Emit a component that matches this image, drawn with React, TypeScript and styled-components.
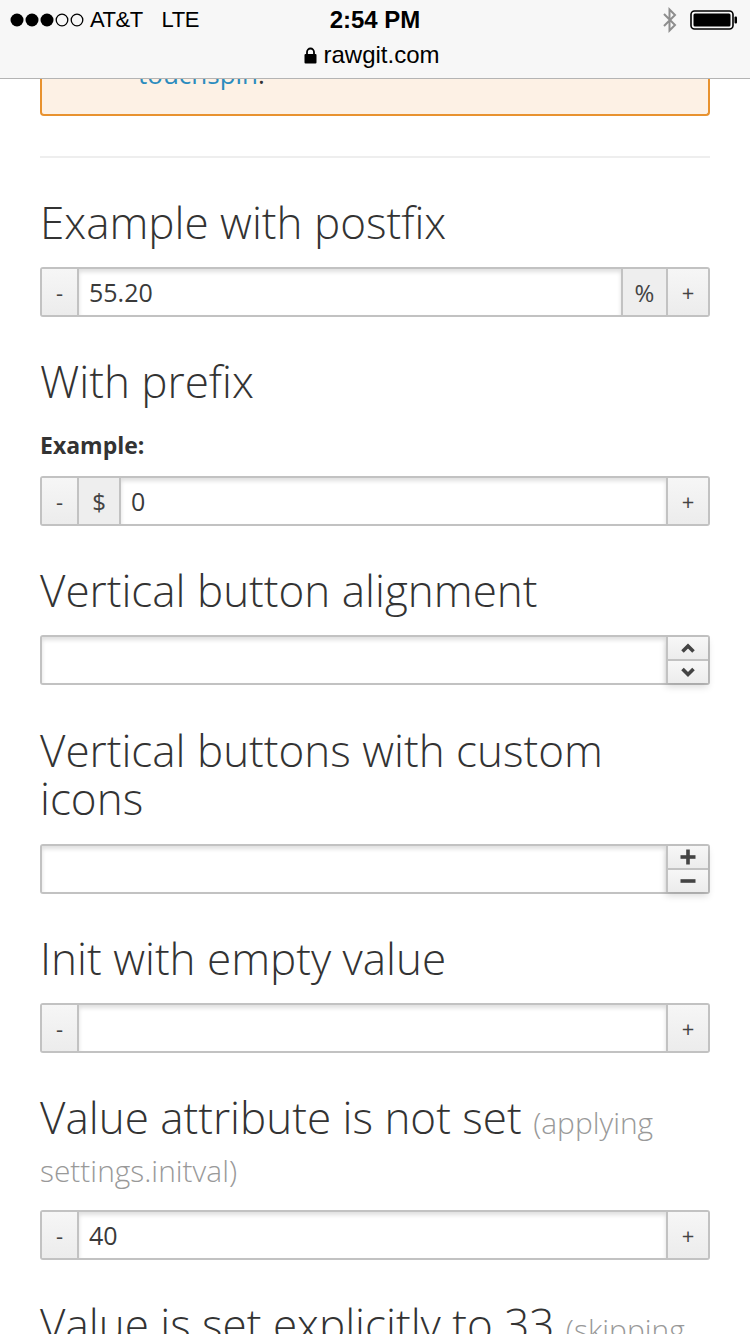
import styled, {createGlobalStyle} from "styled-components";

const GlobalStyle = createGlobalStyle`
    html, body {
        margin: 0;
        padding: 0;
        background: #fff;
    }
    body {
        font-family: 'Open Sans', 'Liberation Sans', sans-serif;
        color: #333;
    }
    * {
        box-sizing: border-box;
    }
`

const SignalDots = () => (
    <svg width="74" height="14" viewBox="0 0 74 14">
        {[0, 1, 2, 3, 4].map(i => (
            <circle key={i} cx={7 + i * 15} cy={7} r={i < 3 ? 6.5 : 5.8}
                    fill={i < 3 ? '#000' : 'none'} stroke="#000" strokeWidth={i < 3 ? 0 : 1.3}/>
        ))}
    </svg>
)

const Bluetooth = () => (
    <svg width="16" height="28" viewBox="0 0 16 28">
        <path d="M2 8 L13 19 L7.5 24.5 V3.5 L13 9 L2 20" fill="none" stroke="#8e8e8e" strokeWidth="2"/>
    </svg>
)

const Battery = () => (
    <svg width="48" height="20" viewBox="0 0 48 20">
        <rect x="1" y="1" width="42" height="18" rx="3.5" fill="none" stroke="#000" strokeWidth="1.6"/>
        <rect x="3.5" y="3.5" width="37" height="13" rx="1.5" fill="#000"/>
        <rect x="44.5" y="6.5" width="2.5" height="7" rx="1" fill="#000"/>
    </svg>
)

const Lock = () => (
    <svg width="13" height="17" viewBox="0 0 13 17">
        <path d="M3 7.5 V5 a3.5 3.5 0 0 1 7 0 V7.5" fill="none" stroke="#000" strokeWidth="1.8"/>
        <rect x="0.5" y="7" width="12" height="9.5" rx="1" fill="#000"/>
    </svg>
)

const Chevron = ({up}: { up?: boolean }) => (
    <svg width="16" height="12" viewBox="0 0 16 12">
        <path d={up ? "M2.5 9.5 L8 4 L13.5 9.5" : "M2.5 3 L8 8.5 L13.5 3"} fill="none" stroke="#444"
              strokeWidth="3.6"/>
    </svg>
)

const Plus = () => (
    <svg width="16" height="16" viewBox="0 0 16 16">
        <rect x="6.2" y="0.5" width="3.6" height="15" fill="#444"/>
        <rect x="0.5" y="6.2" width="15" height="3.6" fill="#444"/>
    </svg>
)

const Minus = () => (
    <svg width="16" height="6" viewBox="0 0 16 6">
        <rect x="0.5" y="1.2" width="15" height="3.6" fill="#444"/>
    </svg>
)

type Piece = { kind: 'btn' | 'addon', text: string, width: number }

const Spinner = ({value = '', before = [], after = []}: { value?: string, before?: Piece[], after?: Piece[] }) => (
    <InputGroup>
        {before.map((p, i) => p.kind === 'btn'
            ? <GroupButton key={i} $width={p.width}>{p.text}</GroupButton>
            : <Addon key={i} $width={p.width}>{p.text}</Addon>)}
        <Field value={value} readOnly/>
        {after.map((p, i) => p.kind === 'btn'
            ? <GroupButton key={i} $width={p.width}>{p.text}</GroupButton>
            : <Addon key={i} $width={p.width}>{p.text}</Addon>)}
    </InputGroup>
)

const VerticalSpinner = ({custom}: { custom?: boolean }) => (
    <InputGroup>
        <Field value="" readOnly/>
        <VerticalButtons>
            <VerticalButton>{custom ? <Plus/> : <Chevron up/>}</VerticalButton>
            <VerticalButton>{custom ? <Minus/> : <Chevron/>}</VerticalButton>
        </VerticalButtons>
    </InputGroup>
)

const minus: Piece = {kind: 'btn', text: '-', width: 35}
const plus: Piece = {kind: 'btn', text: '+', width: 42}

export default function App() {
    return (
        <>
            <GlobalStyle/>
            <BrowserChrome>
                <StatusRow>
                    <Carrier>
                        <SignalDots/>
                        <span>AT&amp;T</span>
                        <span>LTE</span>
                    </Carrier>
                    <Time>2:54 PM</Time>
                    <StatusIcons>
                        <Bluetooth/>
                        <Battery/>
                    </StatusIcons>
                </StatusRow>
                <AddressRow>
                    <Lock/>
                    <span>rawgit.com</span>
                </AddressRow>
            </BrowserChrome>
            <Page>
                <Alert>
                    <AlertText>Please report issues and feature requests on the project page of bootstrap-</AlertText>
                    <AlertList>
                        <li><a href="#">touchspin</a>.</li>
                    </AlertList>
                </Alert>
                <Rule/>

                <Heading>Example with postfix</Heading>
                <Spinner value="55.20" before={[minus]} after={[{kind: 'addon', text: '%', width: 45}, plus]}/>

                <Heading>With prefix</Heading>
                <Label>Example:</Label>
                <Spinner value="0" before={[minus, {kind: 'addon', text: '$', width: 42}]} after={[plus]}/>

                <Heading>Vertical button alignment</Heading>
                <VerticalSpinner/>

                <Heading $tall>Vertical buttons with custom icons</Heading>
                <VerticalSpinner custom/>

                <Heading>Init with empty value</Heading>
                <Spinner before={[minus]} after={[plus]}/>

                <Heading>Value attribute is not set <small>(applying settings.initval)</small></Heading>
                <Spinner value="40" before={[minus]} after={[plus]}/>

                <Heading>Value is set explicitly to 33 <small>(skipping settings.initval)</small></Heading>
                <Spinner value="33" before={[minus]} after={[plus]}/>
            </Page>
        </>
    );
}

const BrowserChrome = styled.header`
    position: fixed;
    top: 0;
    left: 0;
    right: 0;
    height: 79px;
    z-index: 10;
    background: #f7f7f7;
    border-bottom: 1px solid #b4b4b4;
    font-family: 'Liberation Sans', Arial, sans-serif;
    color: #000;
`

const StatusRow = styled.div`
    position: relative;
    height: 40px;
    display: flex;
    align-items: center;
    justify-content: space-between;
    padding: 0 12px 0 10px;
`

const Carrier = styled.div`
    display: flex;
    align-items: center;
    gap: 6px;
    font-size: 22px;
    letter-spacing: -0.5px;

    span + span {
        margin-left: 13px;
    }
`

const Time = styled.div`
    position: absolute;
    left: 0;
    right: 0;
    text-align: center;
    font-size: 24px;
    font-weight: 700;
    pointer-events: none;
`

const StatusIcons = styled.div`
    display: flex;
    align-items: center;
    gap: 12px;
`

const AddressRow = styled.div`
    display: flex;
    align-items: center;
    justify-content: center;
    gap: 6px;
    font-size: 24px;
    padding-top: 1px;
    padding-right: 6px;
`

const Page = styled.main`
    padding: 0 40px 40px;
`

const Alert = styled.div`
    border: 2px solid #e8922f;
    border-top: none;
    border-radius: 0 0 4px 4px;
    background: #fdf1e5;
    padding: 20px 28px 22px;
    font-size: 26px;
    line-height: 36px;
`

const AlertText = styled.p`
    margin: 0;
    height: 36px;
    overflow: hidden;
`

const AlertList = styled.ul`
    margin: 0;
    padding-left: 68px;
    list-style: none;

    a {
        color: #2b8cbe;
        text-decoration: none;
    }
`

const Rule = styled.hr`
    margin: 40px 0 0;
    border: 0;
    border-top: 2px solid #eee;
`

const Heading = styled.h3<{ $tall?: boolean }>`
    margin: ${p => p.$tall ? '41px 0 22px' : '40px 0 21px'};
    font-size: 44px;
    line-height: 48px;
    font-weight: 300;
    color: #333;

    small {
        font-size: 68%;
        line-height: 0;
        color: #999;
    }
`

const Label = styled.label`
    display: block;
    margin: 0 0 12px;
    font-size: 23px;
    line-height: 38px;
    font-weight: 700;
    color: #333;
`

const InputGroup = styled.div`
    display: flex;
    height: 50px;
    border: 2px solid #c2c2c2;
    border-radius: 3px;
    background: #fff;
`

const Field = styled.input`
    flex: 1;
    min-width: 0;
    height: 100%;
    border: 0;
    margin: 0;
    padding: 0 10px;
    font-family: 'Open Sans', sans-serif;
    font-size: 25px;
    color: #3a3a3a;
    background: #fff;
    box-shadow: inset 0 3px 4px rgba(0, 0, 0, 0.13);
    outline: none;
`

const GroupButton = styled.button<{ $width: number }>`
    flex: none;
    width: ${p => p.$width}px;
    height: 100%;
    margin: 0;
    padding: 0;
    border: 0;
    background: linear-gradient(#f6f6f6, #ececec);
    font-family: 'Open Sans', sans-serif;
    font-size: 22px;
    color: #444;

    & + &, & + input, input + &, span + & {
        border-left: 2px solid #c2c2c2;
    }
`

const Addon = styled.span<{ $width: number }>`
    flex: none;
    width: ${p => p.$width}px;
    display: flex;
    align-items: center;
    justify-content: center;
    background: #eee;
    font-size: 24px;
    color: #444;
    border-left: 2px solid #c2c2c2;

    & + input {
        border-left: 2px solid #c2c2c2;
    }
`

const VerticalButtons = styled.div`
    flex: none;
    width: 42px;
    display: flex;
    flex-direction: column;
    border-left: 2px solid #c2c2c2;
    box-shadow: 0 4px 7px rgba(0, 0, 0, 0.14);
`

const VerticalButton = styled.button`
    flex: 1;
    display: flex;
    align-items: center;
    justify-content: center;
    margin: 0;
    padding: 0;
    border: 0;
    background: linear-gradient(#f7f7f7, #ececec);

    & + & {
        border-top: 2px solid #c2c2c2;
    }
`
